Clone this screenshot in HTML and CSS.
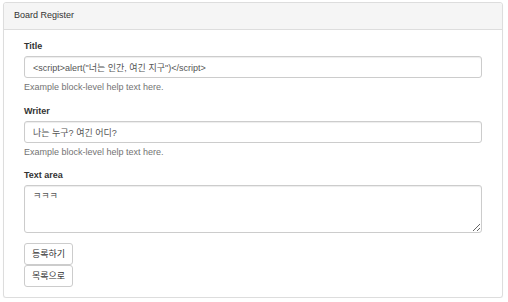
FILE: index.html
```html
<!DOCTYPE html>
<html>

<head>
    <meta charset="utf-8">
    <title>Board Register</title>
    <link rel="stylesheet" href="styles.css">
</head>

<body>
    <div class="panel">
        <div class="panel-heading">Board Register</div>
        <div class="panel-body">
            <form class="register-form">
                <div class="form-group">
                    <label for="title">Title</label>
                    <input type="text" id="title" class="form-control" value='<script>alert("너는 인간, 여긴 지구")</script>'>
                    <p class="help-block">Example block-level help text here.</p>
                </div>
                <div class="form-group">
                    <label for="writer">Writer</label>
                    <input type="text" id="writer" class="form-control" value="나는 누구? 여긴 어디?">
                    <p class="help-block">Example block-level help text here.</p>
                </div>
                <div class="form-group">
                    <label for="content">Text area</label>
                    <textarea id="content" class="form-control text-area">ㅋㅋㅋ</textarea>
                </div>
                <div class="buttons">
                    <button type="button" class="btn">등록하기</button>
                    <button type="button" class="btn">목록으로</button>
                </div>
            </form>
        </div>
    </div>
</body>

</html>
```

FILE: styles.css
```css
body {
    margin: 0;
    padding: 2px 5px 0 3px;
    font-family: "Liberation Sans", "Noto Sans CJK KR", sans-serif;
    font-size: 9px;
    line-height: 13px;
    color: #333;
    background-color: #fff;
}

.panel {
    border: 1px solid #ddd;
    border-radius: 3px;
    background-color: #fff;
    box-shadow: 0 1px 1px rgba(0, 0, 0, .05);
}

.panel-heading {
    padding: 6px 10px 7px;
    font-size: 9px;
    background-color: #f5f5f5;
    border-bottom: 1px solid #ddd;
    border-radius: 3px 3px 0 0;
}

.panel-body {
    padding: 10px 10px 10px;
}

.register-form {
    margin: 0;
    padding: 0 10px;
}

.form-group {
    margin-bottom: 10px;
}

.form-group:first-child {
    margin-bottom: 11px;
}

label {
    display: block;
    font-weight: bold;
    margin-bottom: 3px;
}

.form-control {
    display: block;
    box-sizing: border-box;
    width: 100%;
    height: 22px;
    padding: 3px 8px;
    font-family: "Liberation Sans", "Noto Sans CJK KR", sans-serif;
    font-size: 9px;
    line-height: 13px;
    color: #555;
    background-color: #fff;
    border: 1px solid #ccc;
    border-radius: 3px;
    box-shadow: inset 0 1px 1px rgba(0, 0, 0, .075);
    margin: 0;
}

.text-area {
    height: 48px;
    padding: 4px 8px;
}

.help-block {
    margin: 3px 0 0;
    color: #737373;
}

.buttons .btn {
    display: block;
    box-sizing: border-box;
    margin: 0;
    height: 22px;
    padding: 0 7px;
    font-family: "Liberation Sans", "Noto Sans CJK KR", sans-serif;
    font-size: 9px;
    line-height: 13px;
    color: #333;
    background-color: #fff;
    border: 1px solid #ccc;
    border-radius: 3px;
}
```
